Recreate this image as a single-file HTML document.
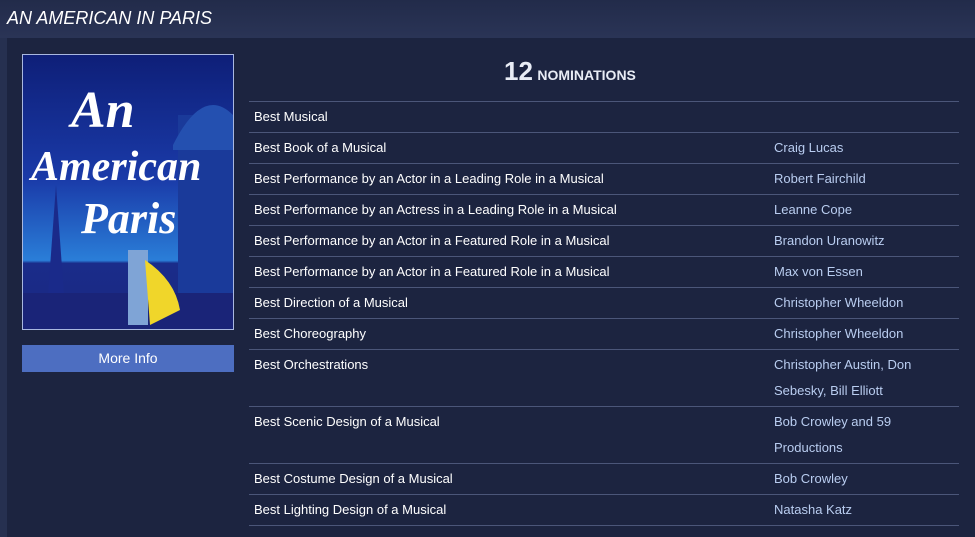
<!DOCTYPE html>
<html><head><style>
body{margin:0;width:975px;height:537px;overflow:hidden;background:#263050;font-family:"Liberation Sans",Arial,sans-serif;position:relative}
.hdr{position:absolute;left:0;top:0;width:975px;height:38px;background:linear-gradient(#222b4a,#2a3456)}
.hdr span{position:absolute;left:7px;top:8px;color:#fff;font-style:italic;font-size:18px}
.panel{position:absolute;left:7px;top:38px;width:968px;height:499px;background:#1c2440}
.poster{position:absolute;left:22px;top:54px;width:210px;height:274px;border:1px solid #a9b8e0;background:linear-gradient(#0e1f78 0%,#1a3aa8 45%,#2a7ed8 75%,#1a2c8a 76%,#1a2780 100%);overflow:hidden}
.btn{position:absolute;left:22px;top:345px;width:212px;height:27px;background:#4d6ec1;color:#fff;font-size:14px;text-align:center;line-height:27px}
.nom{position:absolute;left:504px;top:56px;color:#e8ecf5;font-weight:bold}
.nom b{font-size:26px}.nom i{font-style:normal;font-size:14px}
.tbl{position:absolute;left:249px;top:101px;width:710px;border-top:1px solid #4b5679;font-size:13px}
.r{position:relative;height:30px;border-bottom:1px solid #4b5679}
.r.d{height:56px}
.c{position:absolute;left:5px;top:2px;line-height:26px;color:#fff}
.n{position:absolute;left:525px;top:2px;width:160px;line-height:26px;color:#b9cdf0}
</style></head><body>
<div class="hdr"><span>AN AMERICAN IN PARIS</span></div>
<div class="panel"></div>
<div class="poster"><svg width="210" height="274">
<rect x="155" y="60" width="55" height="214" fill="#1a3a9a"/>
<path d="M150 90 Q180 30 210 60 V95 H150Z" fill="#2450b0"/>
<path d="M25 240 L33 130 L41 240Z" fill="#1a2a8a"/>
<rect x="0" y="238" width="210" height="36" fill="#1a2478"/>
<text x="48" y="72" fill="#fff" font-size="52" font-weight="bold" font-style="italic" font-family="Liberation Serif">An</text>
<text x="8" y="125" fill="#fff" font-size="42" font-weight="bold" font-style="italic" font-family="Liberation Serif">American</text>
<text x="58" y="178" fill="#fff" font-size="44" font-weight="bold" font-style="italic" font-family="Liberation Serif">Paris</text>
<path d="M105 195 h20 v75 h-20z" fill="#7fa4d6"/>
<path d="M122 205 q30 20 35 50 l-30 15z" fill="#f0d62a"/>
</svg></div>
<div class="btn">More Info</div>
<div class="nom"><b>12</b> <i>NOMINATIONS</i></div>
<div class="tbl">
<div class="r"><div class="c">Best Musical</div></div>
<div class="r"><div class="c">Best Book of a Musical</div><div class="n">Craig Lucas</div></div>
<div class="r"><div class="c">Best Performance by an Actor in a Leading Role in a Musical</div><div class="n">Robert Fairchild</div></div>
<div class="r"><div class="c">Best Performance by an Actress in a Leading Role in a Musical</div><div class="n">Leanne Cope</div></div>
<div class="r"><div class="c">Best Performance by an Actor in a Featured Role in a Musical</div><div class="n">Brandon Uranowitz</div></div>
<div class="r"><div class="c">Best Performance by an Actor in a Featured Role in a Musical</div><div class="n">Max von Essen</div></div>
<div class="r"><div class="c">Best Direction of a Musical</div><div class="n">Christopher Wheeldon</div></div>
<div class="r"><div class="c">Best Choreography</div><div class="n">Christopher Wheeldon</div></div>
<div class="r d"><div class="c">Best Orchestrations</div><div class="n">Christopher Austin, Don Sebesky, Bill Elliott</div></div>
<div class="r d"><div class="c">Best Scenic Design of a Musical</div><div class="n">Bob Crowley and 59 Productions</div></div>
<div class="r"><div class="c">Best Costume Design of a Musical</div><div class="n">Bob Crowley</div></div>
<div class="r"><div class="c">Best Lighting Design of a Musical</div><div class="n">Natasha Katz</div></div>
</div>
</body></html>
